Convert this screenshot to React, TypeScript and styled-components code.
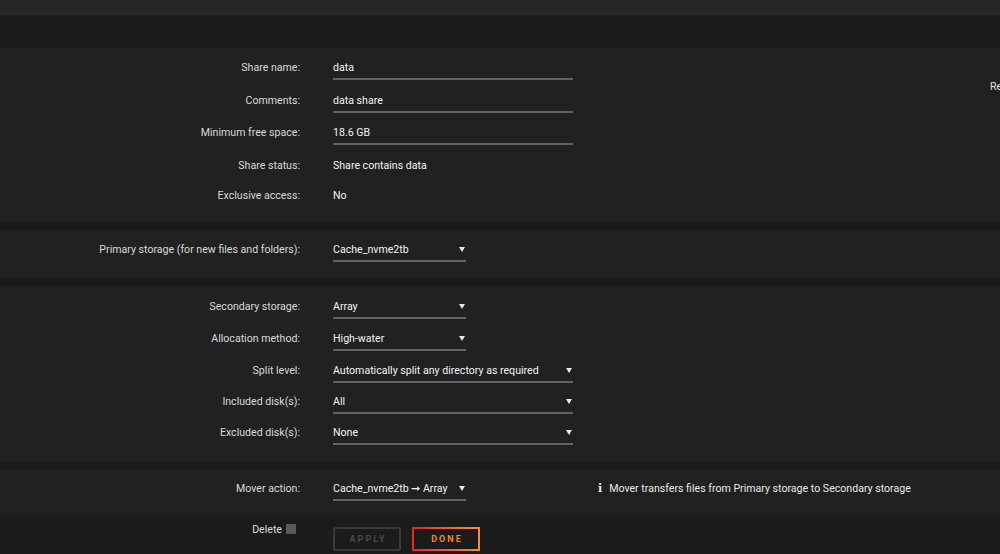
import styled, { createGlobalStyle } from 'styled-components';

const Global = createGlobalStyle`
  html, body {
    margin: 0;
    padding: 0;
    background: #1c1b1b;
    overflow: hidden;
  }
  body {
    font-family: Roboto, "Liberation Sans", sans-serif;
    font-size: 10.6px;
    color: #f2f2f2;
  }
`;

const Page = styled.div`
  width: 1000px;
  height: 554px;
  overflow: hidden;
`;

const TopBar = styled.div`
  height: 13px;
  background: #262626;
  border-bottom: 2px solid #2b2b2b;
`;

const Header = styled.div`
  height: 33px;
  background: #1c1b1b;
`;

const Section = styled.div<{ $top: number; $bottom: number }>`
  display: flex;
  background: #212121;
  padding: ${(p) => p.$top}px 0 ${(p) => p.$bottom}px;
  margin-bottom: 9px;
`;

const Form = styled.div`
  flex: 0 0 990px;
  display: flex;
  flex-direction: column;
`;

const Aside = styled.div`
  padding-top: 20px;
  white-space: nowrap;
  color: #e0e0e0;
  line-height: 24px;
`;

const Row = styled.div<{ $h?: number }>`
  display: flex;
  align-items: flex-start;
  height: ${(p) => p.$h ?? 32}px;
`;

const Label = styled.div`
  width: 300px;
  text-align: right;
  line-height: 24px;
  padding-top: 1px;
  color: #dadada;
  flex-shrink: 0;
  margin-right: 33px;
`;

const Value = styled.div`
  line-height: 24px;
  padding-top: 1px;
  color: #f4f4f4;
`;

const Input = styled.div<{ $w: number }>`
  box-sizing: border-box;
  width: ${(p) => p.$w}px;
  height: 25px;
  line-height: 24px;
  padding-top: 1px;
  border-bottom: 2px solid #626262;
  color: #f4f4f4;
  white-space: nowrap;
`;

const Select = styled(Input)`
  position: relative;
  padding-right: 12px;
  &::after {
    content: '';
    position: absolute;
    right: 1px;
    top: 10px;
    border-left: 3px solid transparent;
    border-right: 3px solid transparent;
    border-top: 5px solid #e8e8e8;
  }
`;

const Note = styled.div`
  margin-left: 132px;
  line-height: 24px;
  padding-top: 1px;
  color: #e8e8e8;
  display: flex;
  align-items: center;
  white-space: nowrap;
`;

const InfoIcon = styled.span`
  font-family: "DejaVu Serif", serif;
  font-weight: bold;
  font-size: 11px;
  margin-right: 7px;
`;

const Footer = styled.div`
  display: flex;
  align-items: flex-start;
  margin-top: -9px;
  padding-top: 11px;
`;

const DeleteLabel = styled.label`
  width: 296px;
  display: flex;
  justify-content: flex-end;
  align-items: center;
  gap: 4px;
  color: #dadada;
  margin-right: 37px;
  height: 14px;
  margin-top: -5px;
`;

const Check = styled.span`
  display: inline-block;
  width: 10px;
  height: 10px;
  background: #5a5a5a;
  border-radius: 1px;
`;

const Button = styled.button<{ $done?: boolean }>`
  box-sizing: border-box;
  width: 68px;
  height: 24px;
  margin-right: 11px;
  background: transparent;
  font-family: Roboto, "Liberation Sans", sans-serif;
  font-size: 9px;
  font-weight: bold;
  letter-spacing: 2px;
  padding: 0 0 0 2px;
  border: 2px solid #3a3a3a;
  border-radius: 2px;
  color: #494949;
  ${(p) =>
    p.$done &&
    `
    border: 2px solid transparent;
    border-image: linear-gradient(90deg, #e22828, #ff8c2f) 1;
    color: #f2891f;
  `}
`;

const App = () => (
  <Page>
    <Global />
    <TopBar />
    <Header />
    <Section $top={7} $bottom={7}>
      <Form>
        <Row $h={33}>
          <Label>Share name:</Label>
          <Input $w={240}>data</Input>
        </Row>
        <Row>
          <Label>Comments:</Label>
          <Input $w={240}>data share</Input>
        </Row>
        <Row $h={33}>
          <Label>Minimum free space:</Label>
          <Input $w={240}>18.6 GB</Input>
        </Row>
        <Row $h={30}>
          <Label>Share status:</Label>
          <Value>Share contains data</Value>
        </Row>
        <Row>
          <Label>Exclusive access:</Label>
          <Value>No</Value>
        </Row>
      </Form>
      <Aside>Read settings from</Aside>
    </Section>
    <Section $top={6} $bottom={9}>
      <Form>
        <Row>
          <Label>Primary storage (for new files and folders):</Label>
          <Select $w={133}>Cache_nvme2tb</Select>
        </Row>
      </Form>
    </Section>
    <Section $top={7} $bottom={7}>
      <Form>
        <Row>
          <Label>Secondary storage:</Label>
          <Select $w={133}>Array</Select>
        </Row>
        <Row>
          <Label>Allocation method:</Label>
          <Select $w={133}>High-water</Select>
        </Row>
        <Row $h={31}>
          <Label>Split level:</Label>
          <Select $w={240}>Automatically split any directory as required</Select>
        </Row>
        <Row $h={31}>
          <Label>Included disk(s):</Label>
          <Select $w={240}>All</Select>
        </Row>
        <Row $h={34}>
          <Label>Excluded disk(s):</Label>
          <Select $w={240}>None</Select>
        </Row>
      </Form>
    </Section>
    <Section $top={6} $bottom={8}>
      <Form>
        <Row>
          <Label>Mover action:</Label>
          <Select $w={133}>Cache_nvme2tb ➞ Array</Select>
          <Note>
            <InfoIcon>i</InfoIcon>
            Mover transfers files from Primary storage to Secondary storage
          </Note>
        </Row>
      </Form>
    </Section>
    <Footer>
      <DeleteLabel>
        Delete <Check />
      </DeleteLabel>
      <Button disabled>APPLY</Button>
      <Button $done>DONE</Button>
    </Footer>
  </Page>
);

export default App;
